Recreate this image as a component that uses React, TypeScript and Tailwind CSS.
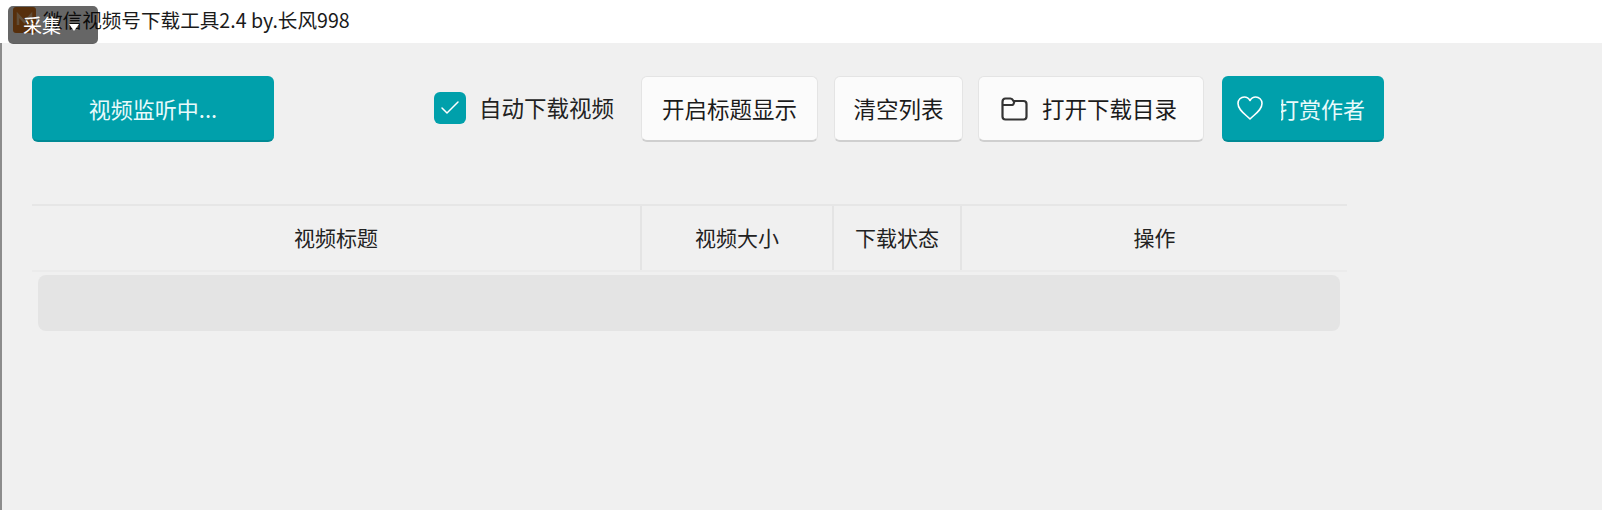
import { Check } from "lucide-react";

const font = "[font-family:'Noto_Sans_CJK_SC','Liberation_Sans',sans-serif]";

function FolderIcon() {
  return (
    <svg width="27" height="24" viewBox="0 0 27 24" fill="none" stroke="#333" strokeWidth="2.200" strokeLinejoin="round">
      <path d="M1.500 5C1.500 2.500 2.500 1.500 4.500 1.500h5c1.500 0 2 .6 3 2.500h10c2 0 3 1 3 3v12.500c0 2-1 3-3 3h-18c-2 0-3-1-3-3z" />
      <path d="M1.500 8h10c1 0 1.500-2.500 2-4" />
    </svg>
  );
}

function HeartIcon() {
  return (
    <svg width="28" height="26" viewBox="0 0 28 26" fill="none" stroke="#fff" strokeWidth="1.600" strokeLinejoin="round">
      <path d="M14 24C9 19 2 15 2 8.500 2 4.500 5 2 8.300 2c2.500 0 4.500 1.300 5.700 3.500C15.200 3.300 17.200 2 19.700 2 23 2 26 4.500 26 8.500 26 15 19 19 14 24z" />
    </svg>
  );
}

function AppIcon() {
  return (
    <svg width="23" height="26" viewBox="0 0 23 26" className="ml-[13px]">
      <rect width="23" height="26" rx="3" fill="#d9771f" />
      <path d="M5 18V8l6.500 7L18 8v10" fill="none" stroke="#f3c48f" strokeWidth="2.500" />
    </svg>
  );
}

function LightButton({ children, className }: { children: React.ReactNode; className: string }) {
  return (
    <button className={`flex h-[66px] items-center justify-center rounded-[6px] border border-[#e4e4e4] border-b-2 border-b-[#cfcfcf] bg-[#fbfbfb] text-[22.500px] text-[#1b1b1b] ${className}`}>
      {children}
    </button>
  );
}

export default function App() {
  return (
    <div className={`relative h-[510px] w-[1602px] overflow-hidden bg-white ${font}`}>
      {/* title bar */}
      <div className="flex h-[43px] items-center pb-[4px]">
        <AppIcon />
        <span className="ml-[7px] text-[19.600px] leading-none text-[#1a1a1a]">微信视频号下载工具2.4 by.长风998</span>
      </div>

      {/* collect overlay */}
      <div className="absolute left-[8px] top-[6px] flex h-[38px] w-[90px] items-center rounded-[5px] bg-black/60 pl-[15px] text-[19px] text-white">
        采集
        <span className="ml-[8px] mt-[4px] h-0 w-0 border-x-[5px] border-t-[7px] border-x-transparent border-t-white" />
      </div>

      <main className="h-[467px] border-l-2 border-[#8c8c8c] bg-[#f0f0f0] pl-[30px] pt-[33px]">
        <div className="flex h-[66px] items-start">
          <button className="flex h-[66px] w-[242px] items-center justify-center rounded-[6px] border-b-2 border-[#008a94] bg-[#00a0ab] text-[22px] text-[#e8fafb]">
            视频监听中...
          </button>

          <div className="ml-[160px] flex h-[66px] items-center pb-[3px]">
            <span className="flex h-[32px] w-[32px] items-center justify-center rounded-[6px] bg-[#00a0ab]">
              <Check size={24} strokeWidth={1.500} className="text-white" />
            </span>
            <span className="ml-[13px] text-[22.500px] text-[#222]">自动下载视频</span>
          </div>

          <LightButton className="ml-[27px] w-[177px]">开启标题显示</LightButton>
          <LightButton className="ml-[16px] w-[129px]">清空列表</LightButton>
          <LightButton className="ml-[15px] w-[226px] pr-[4px]">
            <FolderIcon />
            <span className="ml-[14px]">打开下载目录</span>
          </LightButton>

          <button className="ml-[18px] flex h-[66px] w-[162px] items-center rounded-[6px] border-b-2 border-[#008a94] bg-[#00a0ab] pl-[14px] text-[22px] text-[#e8fafb]">
            <HeartIcon />
            {/* covers the left edge of the first glyph, as in the source */}
            <span className="relative z-10 ml-[13px] h-[30px] w-[4px] shrink-0 bg-[#00a0ab]" />
            <span className="-ml-[4px]">打赏作者</span>
          </button>
        </div>

        {/* table */}
        <div className="mt-[62px] w-[1315px]">
          <div className="flex h-[68px] border-y-2 border-t-[#e6e6e6] border-b-[#ebebeb] text-[21px] text-[#222]">
            <div className="flex w-[610px] items-center justify-center border-r-2 border-[#e4e4e4]">视频标题</div>
            <div className="flex w-[192px] items-center justify-center border-r-2 border-[#e4e4e4]">视频大小</div>
            <div className="flex w-[128px] items-center justify-center border-r-2 border-[#e4e4e4]">下载状态</div>
            <div className="flex flex-1 items-center justify-center">操作</div>
          </div>
          <div className="ml-[6px] mr-[7px] mt-[3px] h-[56px] rounded-[8px] bg-[#e4e4e4]" />
        </div>
      </main>
    </div>
  );
}
